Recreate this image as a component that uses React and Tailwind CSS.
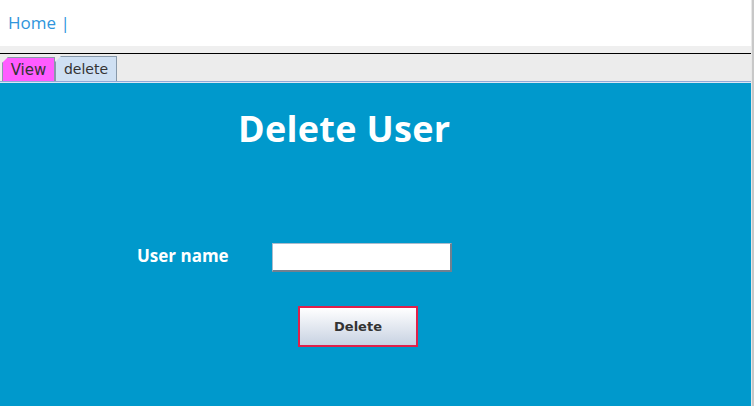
export default function App() {
  const comic = { fontFamily: '"Comic Sans MS", "Open Sans", sans-serif' };
  return (
    <div className="w-[754px] h-[406px] flex overflow-hidden bg-white">
      <div className="flex-1 flex flex-col">
        <div className="h-[46px] bg-white flex items-center pl-[8px] pt-[0px]">
          <span className="text-[17px] text-[#2f95dc]" style={comic}>Home |</span>
        </div>
        <div className="h-[7px] bg-[#efefef]" />
        <div className="h-[1px] bg-black" />
        <div className="h-[27px] bg-[#ececec] flex items-end pl-[2px]">
          <div className="relative h-[24px] w-[53px] bg-[#ff5cff] border border-[#8899aa] border-b-0 [clip-path:polygon(6px_0,100%_0,100%_100%,0_100%,0_6px)] flex items-center justify-center text-[15px] text-[#333] pt-[1px]" style={{ fontFamily: '"DejaVu Sans", sans-serif' }}>
            View
          </div>
          <div className="relative h-[25px] w-[62px] bg-[#cfe0f3] border border-[#8899aa] border-b-0 [clip-path:polygon(6px_0,100%_0,100%_100%,0_100%,0_6px)] flex items-center justify-center text-[14px] text-[#333] pt-[1px]" style={{ fontFamily: '"DejaVu Sans", sans-serif' }}>
            delete
          </div>
        </div>
        <div className="h-[1px] bg-[#8fa8d8]" />
        <div className="h-[1px] bg-[#dde6f5]" />
        <div className="flex-1 bg-[#0099cc] relative">
          <div className="absolute left-[238px] top-[28px] text-[36px] font-bold text-white leading-none tracking-[0.3px]" style={comic}>
            Delete User
          </div>
          <div className="absolute left-[137px] top-[164px] text-[17px] font-bold text-white leading-none" style={comic}>
            User name
          </div>
          <div className="absolute left-[272px] top-[160px] w-[180px] h-[29px] bg-white border border-t-[#aabbcc] border-l-[#aabbcc] border-r-[#708090] border-b-[#708090] border-r-2 border-b-2" />
          <button className="absolute left-[298px] top-[223px] w-[120px] h-[41px] border-2 border-[#e0204a] bg-gradient-to-b from-white to-[#c8d2e2] text-[13px] font-bold text-[#333] flex items-center justify-center" style={{ fontFamily: '"DejaVu Sans", sans-serif' }}>
            Delete
          </button>
        </div>
      </div>
      <div className="w-[3px] bg-[#c8c8c8] border-l border-[#e8e8e8]" />
    </div>
  );
}
